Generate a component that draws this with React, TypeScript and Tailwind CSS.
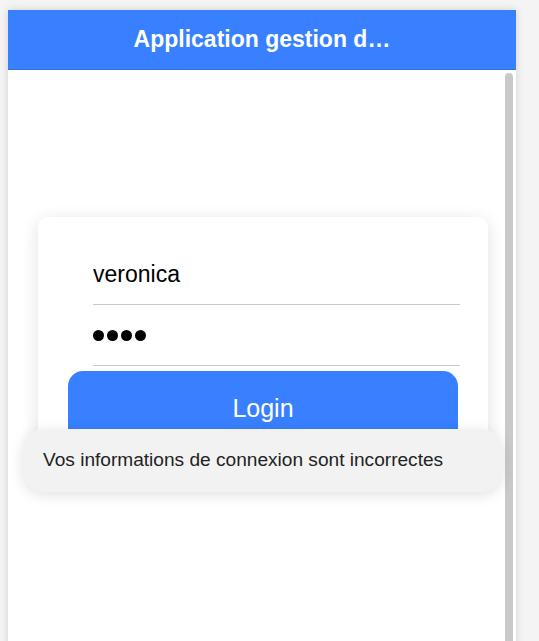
import React from "react";

export default function App() {
  return (
    <div
      className="relative h-[641px] w-[539px] overflow-hidden bg-[#f4f4f4] pl-[8px] pt-[10px]"
      style={{ fontFamily: '"Liberation Sans", Arial, sans-serif' }}
    >
      <div className="relative flex h-[700px] w-[508px] flex-col bg-white shadow-[0_0_8px_rgba(0,0,0,0.14)]">
        <header className="flex h-[60px] items-center justify-center border-b border-[#3171e0] bg-[#3880ff]">
          <h1 className="text-[23px] font-bold text-white">Application gestion d…</h1>
        </header>
        <main className="relative flex-1">
          <div className="absolute right-[3px] top-[3px] bottom-0 w-[8px] rounded-t-full bg-[#c9c9c9]" />
          <div className="ml-[30px] mt-[147px] w-[450px] rounded-[10px] bg-white pt-[27px] pb-[24px] shadow-[0_4px_18px_rgba(0,0,0,0.12)]">
            <div className="ml-[55px] mr-[28px] flex h-[61px] items-center border-b border-[#c8c8c8] text-[23px] text-black">
              veronica
            </div>
            <div className="ml-[55px] mr-[28px] flex h-[61px] items-center gap-[3px] border-b border-[#c8c8c8]">
              <span className="h-[11px] w-[11px] rounded-full bg-black" />
              <span className="h-[11px] w-[11px] rounded-full bg-black" />
              <span className="h-[11px] w-[11px] rounded-full bg-black" />
              <span className="h-[11px] w-[11px] rounded-full bg-black" />
            </div>
            <button className="mx-[30px] mt-[5px] flex h-[76px] w-[390px] items-center justify-center rounded-[15px] bg-[#3880ff] text-[25px] text-white">
              Login
            </button>
          </div>
        </main>
      </div>
      <div className="absolute left-[23px] top-[429px] flex h-[63px] w-[479px] items-center rounded-[21px] bg-[#f2f2f2] px-[20px] text-[19.1px] text-[#222] shadow-[0_3px_14px_rgba(0,0,0,0.12)]">
        Vos informations de connexion sont incorrectes
      </div>
    </div>
  );
}
